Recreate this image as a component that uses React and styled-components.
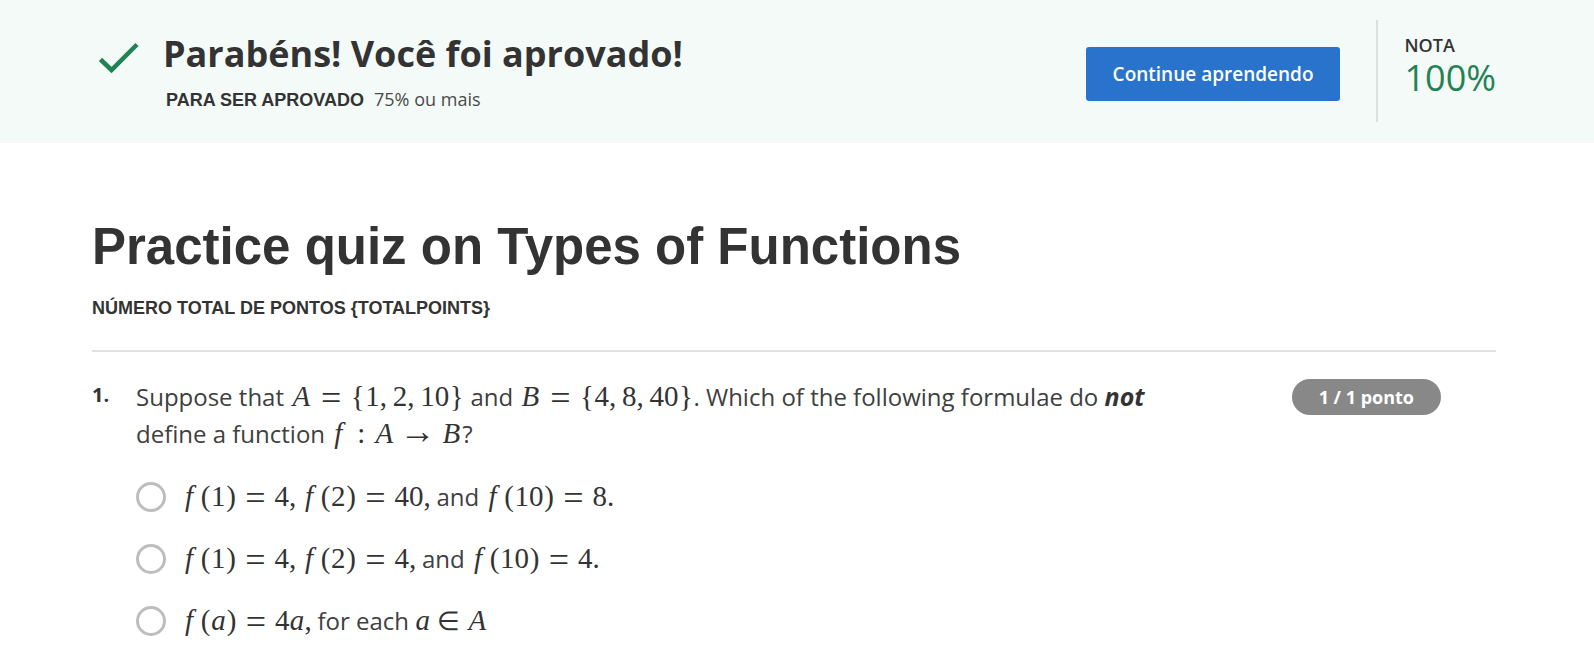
import React from "react";
import styled, { createGlobalStyle } from "styled-components";

const Global = createGlobalStyle`
  *, *::before, *::after { box-sizing: border-box; }
  body {
    margin: 0;
    background: #fff;
    color: #333;
    font-family: "Open Sans", "Noto Sans", sans-serif;
  }
  h1, h2, p, ol, fieldset { margin: 0; padding: 0; border: 0; }
`;

const Banner = styled.header`
  display: flex;
  align-items: flex-start;
  justify-content: space-between;
  gap: 32px;
  padding: 20px 98px 21px 92px;
  background: #f4faf8;
`;

const Result = styled.div`
  display: flex;
  align-items: flex-start;
  gap: 24px;
  padding: 10px 0 0 7px;
`;

const Check = styled.svg`
  flex: none;
  width: 40px;
  height: 32px;
  margin-top: 12px;
`;

const BannerTitle = styled.h2`
  font-size: 36px;
  font-weight: 700;
  line-height: 48px;
`;

const PassLine = styled.p`
  display: flex;
  align-items: baseline;
  gap: 10px;
  margin-top: 7px;
  padding-left: 3px;
  font-size: 18px;
  font-weight: 400;
  line-height: 28px;
`;

const Label = styled.strong`
  font-family: "Liberation Sans", Arial, sans-serif;
  font-size: 18px;
  font-weight: 700;
`;

const Muted = styled.span`
  color: #4a4a4a;
`;

const Actions = styled.div`
  display: flex;
  align-items: flex-start;
  gap: 36px;
`;

const ContinueButton = styled.button`
  height: 54px;
  margin-top: 27px;
  padding: 0 27px;
  border: 0;
  border-radius: 3px;
  background: #2a73cc;
  color: #fff;
  font: 600 19px "Open Sans", "Noto Sans", sans-serif;
  cursor: pointer;
`;

const Grade = styled.div`
  display: flex;
  flex-direction: column;
  height: 102px;
  padding: 12px 0 0 26px;
  border-left: 2px solid #dcdfde;
`;

const GradeLabel = styled.span`
  font-size: 18px;
  font-weight: 600;
  line-height: 26px;
`;

const GradeValue = styled.span`
  color: #1f8354;
  font-size: 36px;
  font-weight: 400;
  line-height: 40px;
`;

const Main = styled.main`
  padding: 72px 98px 0 92px;
`;

const Title = styled.h1`
  font-family: "Liberation Sans", Arial, sans-serif;
  font-size: 51px;
  font-weight: 700;
  line-height: 64px;
`;

const Total = styled.p`
  padding: 16px 0 29px;
  border-bottom: 2px solid #e1e1e1;
  line-height: 26px;
`;

const Question = styled.section`
  display: flex;
  align-items: flex-start;
  padding-top: 26px;
`;

const Number = styled.span`
  flex: none;
  width: 44px;
  font-size: 20px;
  font-weight: 700;
  line-height: 34px;
`;

const Body = styled.fieldset`
  flex: 1;
  min-width: 0;
  max-width: 1040px;
  color: #404040;
  font-size: 24px;
  font-weight: 400;
  line-height: 37px;
`;

const Prompt = styled.legend`
  padding: 0;
`;

const Strong = styled.em`
  color: #333;
  font-size: 25px;
  font-weight: 700;
`;

const Points = styled.span`
  flex: none;
  margin: 1px 55px 0 auto;
  padding: 0 27px;
  border-radius: 18px;
  background: #888;
  color: #fff;
  font-size: 18px;
  font-weight: 700;
  line-height: 36px;
`;

const Options = styled.div`
  display: flex;
  flex-direction: column;
  gap: 25px;
  padding-top: 26px;
`;

const Option = styled.label`
  display: flex;
  align-items: center;
  gap: 16px;
  cursor: pointer;
`;

const Radio = styled.input`
  appearance: none;
  flex: none;
  width: 30px;
  height: 30px;
  margin: 0;
  border: 3px solid #bdbdbd;
  border-radius: 50%;
  background: #fff;
  &:checked { border-width: 9px; border-color: #2a73cc; }
`;

const MathText = styled.span`
  color: #333;
  font-family: "Liberation Serif", "Times New Roman", serif;
  font-size: 29px;
  font-weight: 400;
  line-height: 1px;
  white-space: nowrap;
`;

const Glyph = styled.span`
  display: inline-block;
  width: ${(p) => p.$width}px;
  text-align: ${(p) => p.$align || "center"};
  text-indent: ${(p) => p.$indent || 0}px;
  font-style: ${(p) => (p.$italic ? "italic" : "normal")};
  font-size: ${(p) => p.$size || 29}px;
  vertical-align: ${(p) => (p.$drop ? "-4px" : "baseline")};
`;

const glyphs = {
  "=": { $width: 38, $size: 36, $drop: true },
  "→": { $width: 45, $size: 36 },
  "∈": { $width: 36, $size: 26 },
  ":": { $width: 24 },
  "{": { $width: 15 },
  "}": { $width: 15 },
  "(": { $width: 11 },
  ")": { $width: 11 },
  ",": { $width: 13, $align: "left" },
  A: { $width: 22, $italic: true },
  B: { $width: 22, $italic: true },
  f: { $width: 18, $italic: true, $align: "left", $indent: 3 },
  a: { $width: 15, $italic: true },
};

/* Typesets a formula, giving relations, brackets and variables their own advance. */
function Formula({ children }) {
  return (
    <MathText>
      {children.split(/([=:→∈{}(),ABfa])/).filter(Boolean).map((part, i) =>
        glyphs[part] ? (
          <Glyph key={i} {...glyphs[part]}>{part}</Glyph>
        ) : (
          <React.Fragment key={i}>{part}</React.Fragment>
        )
      )}
    </MathText>
  );
}

const options = [
  <><Formula>f(1)=4,f(2)=40,</Formula>and <Formula>f(10)=8.</Formula></>,
  <><Formula>f(1)=4,f(2)=4,</Formula>and <Formula>f(10)=4.</Formula></>,
  <><Formula>f(a)=4a,</Formula>for each <Formula>a∈A</Formula></>,
];

export default function App() {
  return (
    <>
      <Global />
      <Banner>
        <Result>
          <Check viewBox="0 0 40 32" aria-hidden="true">
            <path d="M1.5 17.5 L12.5 28 L38 2.5" fill="none" stroke="#1f8354" strokeWidth="4.5" />
          </Check>
          <div>
            <BannerTitle>Parabéns! Você foi aprovado!</BannerTitle>
            <PassLine><Label>PARA SER APROVADO</Label><Muted>75% ou mais</Muted></PassLine>
          </div>
        </Result>
        <Actions>
          <ContinueButton type="button">Continue aprendendo</ContinueButton>
          <Grade>
            <GradeLabel>NOTA</GradeLabel>
            <GradeValue>100%</GradeValue>
          </Grade>
        </Actions>
      </Banner>
      <Main>
        <Title>Practice quiz on Types of Functions</Title>
        <Total><Label>NÚMERO TOTAL DE PONTOS {"{TOTALPOINTS}"}</Label></Total>
        <Question>
          <Number>1.</Number>
          <Body>
            <Prompt>
              Suppose that <Formula>{"A={1,2,10}"}</Formula> and <Formula>{"B={4,8,40}"}</Formula>. Which of the
              following formulae do <Strong>not</Strong> define a function <Formula>f:A→B</Formula>?
            </Prompt>
            <Options>
              {options.map((text, i) => (
                <Option key={i}>
                  <Radio type="radio" name="answer" />
                  <span>{text}</span>
                </Option>
              ))}
            </Options>
          </Body>
          <Points>1 / 1 ponto</Points>
        </Question>
      </Main>
    </>
  );
}
